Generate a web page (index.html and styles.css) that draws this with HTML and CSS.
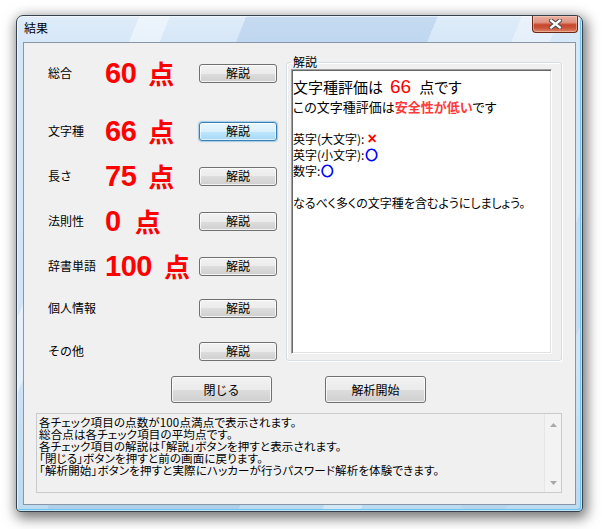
FILE: index.html
```html
<!DOCTYPE html>
<html lang="ja">
<head>
<meta charset="utf-8">
<title>結果</title>
<link rel="stylesheet" href="styles.css">
</head>
<body>
<div class="window">
  <div class="titlebar">
    <span class="title">結果</span>
    <button class="close" aria-label="閉じる">
      <svg width="13" height="10" viewBox="0 0 13 10"><path d="M2.2 1.6 L10.8 8.4 M10.8 1.6 L2.2 8.4" stroke="#4d4d4d" stroke-width="4.4" stroke-linecap="square"/><path d="M2.2 1.6 L10.8 8.4 M10.8 1.6 L2.2 8.4" stroke="#ffffff" stroke-width="2.4" stroke-linecap="square"/></svg>
    </button>
  </div>
  <div class="client">
    <div class="main">
      <div class="scores">
        <div class="row"><span class="label">総合</span><span class="score"><span class="num">60</span><span class="ten">点</span></span><button class="btn">解説</button></div>
        <div class="row"><span class="label">文字種</span><span class="score"><span class="num">66</span><span class="ten">点</span></span><button class="btn focus">解説</button></div>
        <div class="row"><span class="label">長さ</span><span class="score"><span class="num">75</span><span class="ten">点</span></span><button class="btn">解説</button></div>
        <div class="row"><span class="label">法則性</span><span class="score"><span class="num">0</span><span class="ten wide">点</span></span><button class="btn">解説</button></div>
        <div class="row"><span class="label">辞書単語</span><span class="score"><span class="num">100</span><span class="ten">点</span></span><button class="btn">解説</button></div>
        <div class="row"><span class="label">個人情報</span><span class="score"></span><button class="btn">解説</button></div>
        <div class="row"><span class="label">その他</span><span class="score"></span><button class="btn">解説</button></div>
      </div>
      <fieldset class="group">
        <legend>解説</legend>
        <div class="detail">
          <div class="l1">文字種評価は<span class="big">66</span>点です</div>
          <div class="l2">この文字種評価は<b class="warn">安全性が低い</b>です</div>
          <div class="ln"></div>
          <div class="ln">英字(大文字):<span class="ng">×</span></div>
          <div class="ln">英字(小文字):<span class="ok">○</span></div>
          <div class="ln">数字:<span class="ok">○</span></div>
          <div class="ln"></div>
          <div class="ln">なるべく多くの文字種を含むようにしましょう。</div>
        </div>
      </fieldset>
    </div>
    <div class="actions">
      <button class="btn large">閉じる</button>
      <button class="btn large">解析開始</button>
    </div>
    <div class="info">
      <div class="info-text">
        <div>各チェック項目の点数が100点満点で表示されます。</div>
        <div>総合点は各チェック項目の平均点です。</div>
        <div>各チェック項目の解説は「解説」ボタンを押すと表示されます。</div>
        <div>「閉じる」ボタンを押すと前の画面に戻ります。</div>
        <div>「解析開始」ボタンを押すと実際にハッカーが行うパスワード解析を体験できます。</div>
      </div>
      <div class="vscroll">
        <svg width="7" height="4" viewBox="0 0 7 4"><path d="M0 4 L3.5 0 L7 4 Z" fill="#a8a8a8"/></svg>
        <svg width="7" height="4" viewBox="0 0 7 4"><path d="M0 0 L3.5 4 L7 0 Z" fill="#a8a8a8"/></svg>
      </div>
    </div>
  </div>
</div>
</body>
</html>
```

FILE: styles.css
```css
* { box-sizing: border-box; }
html, body { margin: 0; padding: 0; background: #ffffff; }
body {
  width: 602px;
  height: 529px;
  overflow: hidden;
  padding: 15px 0 0 16px;
  font-family: "Noto Sans CJK JP", "Liberation Sans", sans-serif;
  font-size: 12px;
  color: #000;
}

.window {
  width: 567px;
  height: 497px;
  border: 1px solid #36424f;
  border-radius: 7px 7px 4px 4px;
  padding: 0 6px 6px 6px;
  display: flex;
  flex-direction: column;
  background:
    linear-gradient(112deg, transparent 0 16%, rgba(255,255,255,.45) 16% 20%, transparent 20% 30%, rgba(150,186,226,.35) 30% 55%, transparent 55% 66%, rgba(255,255,255,.35) 66% 71%, transparent 71% 84%, rgba(170,200,232,.3) 84% 90%, transparent 90%),
    linear-gradient(to bottom, #dfecf9 0, #d6e7f8 26px, #d2e4f6 70%, #bcdaf0 100%);
  box-shadow: 2px 4px 13px 2px rgba(0,0,0,.55), inset 0 0 0 1px rgba(255,255,255,.6), inset -2px -2px 0 #6cc3ec;
}

.titlebar {
  height: 26px;
  display: flex;
  align-items: flex-start;
  justify-content: space-between;
}
.title {
  margin: 5px 0 0 1px;
  font-size: 12px;
  line-height: 14px;
  color: #000;
}
.close {
  width: 46px;
  height: 17px;
  margin: 0 -2px 0 0;
  padding: 0;
  border: 1px solid #6b2616;
  border-top: none;
  border-radius: 0 0 4px 4px;
  background: linear-gradient(to bottom, #eab1a1 0%, #de9382 40%, #c7472c 55%, #c9553a 75%, #e0886a 100%);
  box-shadow: inset 0 0 0 1px rgba(255,220,200,.45);
  display: flex;
  align-items: center;
  justify-content: center;
}
.close svg { display: block; }

.client {
  height: 463px;
  border: 1px solid #8797a8;
  background: #f0f0f0;
  display: flex;
  flex-direction: column;
}

.main {
  display: flex;
  align-items: flex-start;
  padding: 12px 0 0 24px;
}

.scores {
  margin-top: 3px;
  display: grid;
  grid-template-rows: 58px 45px 45px 45px 42px 43px 30px;
}
.row {
  height: 30px;
  display: flex;
  align-items: center;
}
.label {
  width: 57px;
  font-size: 12px;
  line-height: 14px;
}
.score {
  width: 94px;
  display: flex;
  align-items: center;
  color: #ff0000;
  line-height: 30px;
  font-weight: bold;
}
.num {
  font-family: "Liberation Sans", sans-serif;
  font-size: 29px;
  letter-spacing: -0.5px;
}
.ten {
  font-family: "Noto Sans CJK JP", sans-serif;
  font-size: 26px;
  margin-left: 12px;
}
.ten.wide { margin-left: 14px; }

.btn {
  font-family: "Noto Sans CJK JP", sans-serif;
  font-size: 12px;
  line-height: 14px;
  color: #000;
  width: 78px;
  height: 19px;
  padding: 0;
  border: 1px solid #707070;
  border-radius: 3px;
  background: linear-gradient(to bottom, #f2f2f2 0%, #ebebeb 50%, #dddddd 50%, #cfcfcf 100%);
  box-shadow: inset 0 0 0 1px rgba(255,255,255,.75);
}
.btn.focus {
  border-color: #3c7fb1;
  background: linear-gradient(to bottom, #eaf6fd 0%, #d9f0fc 50%, #bee6fd 50%, #a7d9f5 100%);
  box-shadow: inset 0 0 0 1px rgba(255,255,255,.6), 0 0 1px 1px rgba(80,170,230,.5);
}

.group {
  margin: 0 0 0 9px;
  width: 276px;
  padding: 0 9px 6px 4px;
  border: 1px solid #d5dfe5;
  border-radius: 3px;
  box-shadow: inset 1px 1px 0 #ffffff, 1px 1px 0 #ffffff;
}
.group legend {
  padding: 0 2px;
  margin: 0;
  font-size: 12px;
  line-height: 14px;
}

.detail {
  width: 261px;
  height: 285px;
  background: #ffffff;
  border: 1px solid;
  border-color: #a0a0a0 #ffffff #ffffff #a0a0a0;
  box-shadow: inset 1px 1px 0 #696969, inset -1px -1px 0 #e3e3e3;
  padding: 0 0 0 1px;
  font-feature-settings: "palt";
  white-space: nowrap;
}
.l1 {
  padding-top: 6px;
  font-size: 15px;
  line-height: 22px;
}
.big {
  font-family: "Liberation Sans", sans-serif;
  font-size: 19px;
  color: #ff0000;
  margin: 0 8px 0 7px;
}
.l2 {
  font-size: 13px;
  line-height: 17px;
}
.warn {
  color: #ff3a3a;
  font-weight: bold;
}
.ln {
  height: 16px;
  font-size: 12px;
  line-height: 16px;
}
.ng {
  color: #ff0000;
  font-family: "Liberation Sans", sans-serif;
  font-weight: bold;
  font-size: 16px;
  margin-left: 3px;
}
.ok {
  color: #0000ff;
  font-weight: bold;
  font-size: 12px;
  -webkit-text-stroke: 1px #0000ff;
  margin-left: 1px;
}

.actions {
  margin-top: 10px;
  display: flex;
  justify-content: center;
  gap: 53px;
  padding-right: 2px;
}
.btn.large {
  width: 101px;
  height: 27px;
}

.info {
  margin: 10px 0 0 12px;
  width: 526px;
  height: 80px;
  border: 1px solid #cacaca;
  background: #f0f0f0;
  display: flex;
}
.info-text {
  flex: 1;
  padding: 2px 0 0 2px;
  font-size: 11.5px;
  line-height: 12px;
  letter-spacing: 0.15px;
  font-feature-settings: "palt";
  white-space: nowrap;
}
.vscroll {
  width: 17px;
  border-left: 1px solid #e6e6e6;
  background: #f3f3f3;
  display: flex;
  flex-direction: column;
  align-items: center;
  justify-content: space-between;
  padding: 9px 0 7px 0;
}
.vscroll svg { display: block; }
```
